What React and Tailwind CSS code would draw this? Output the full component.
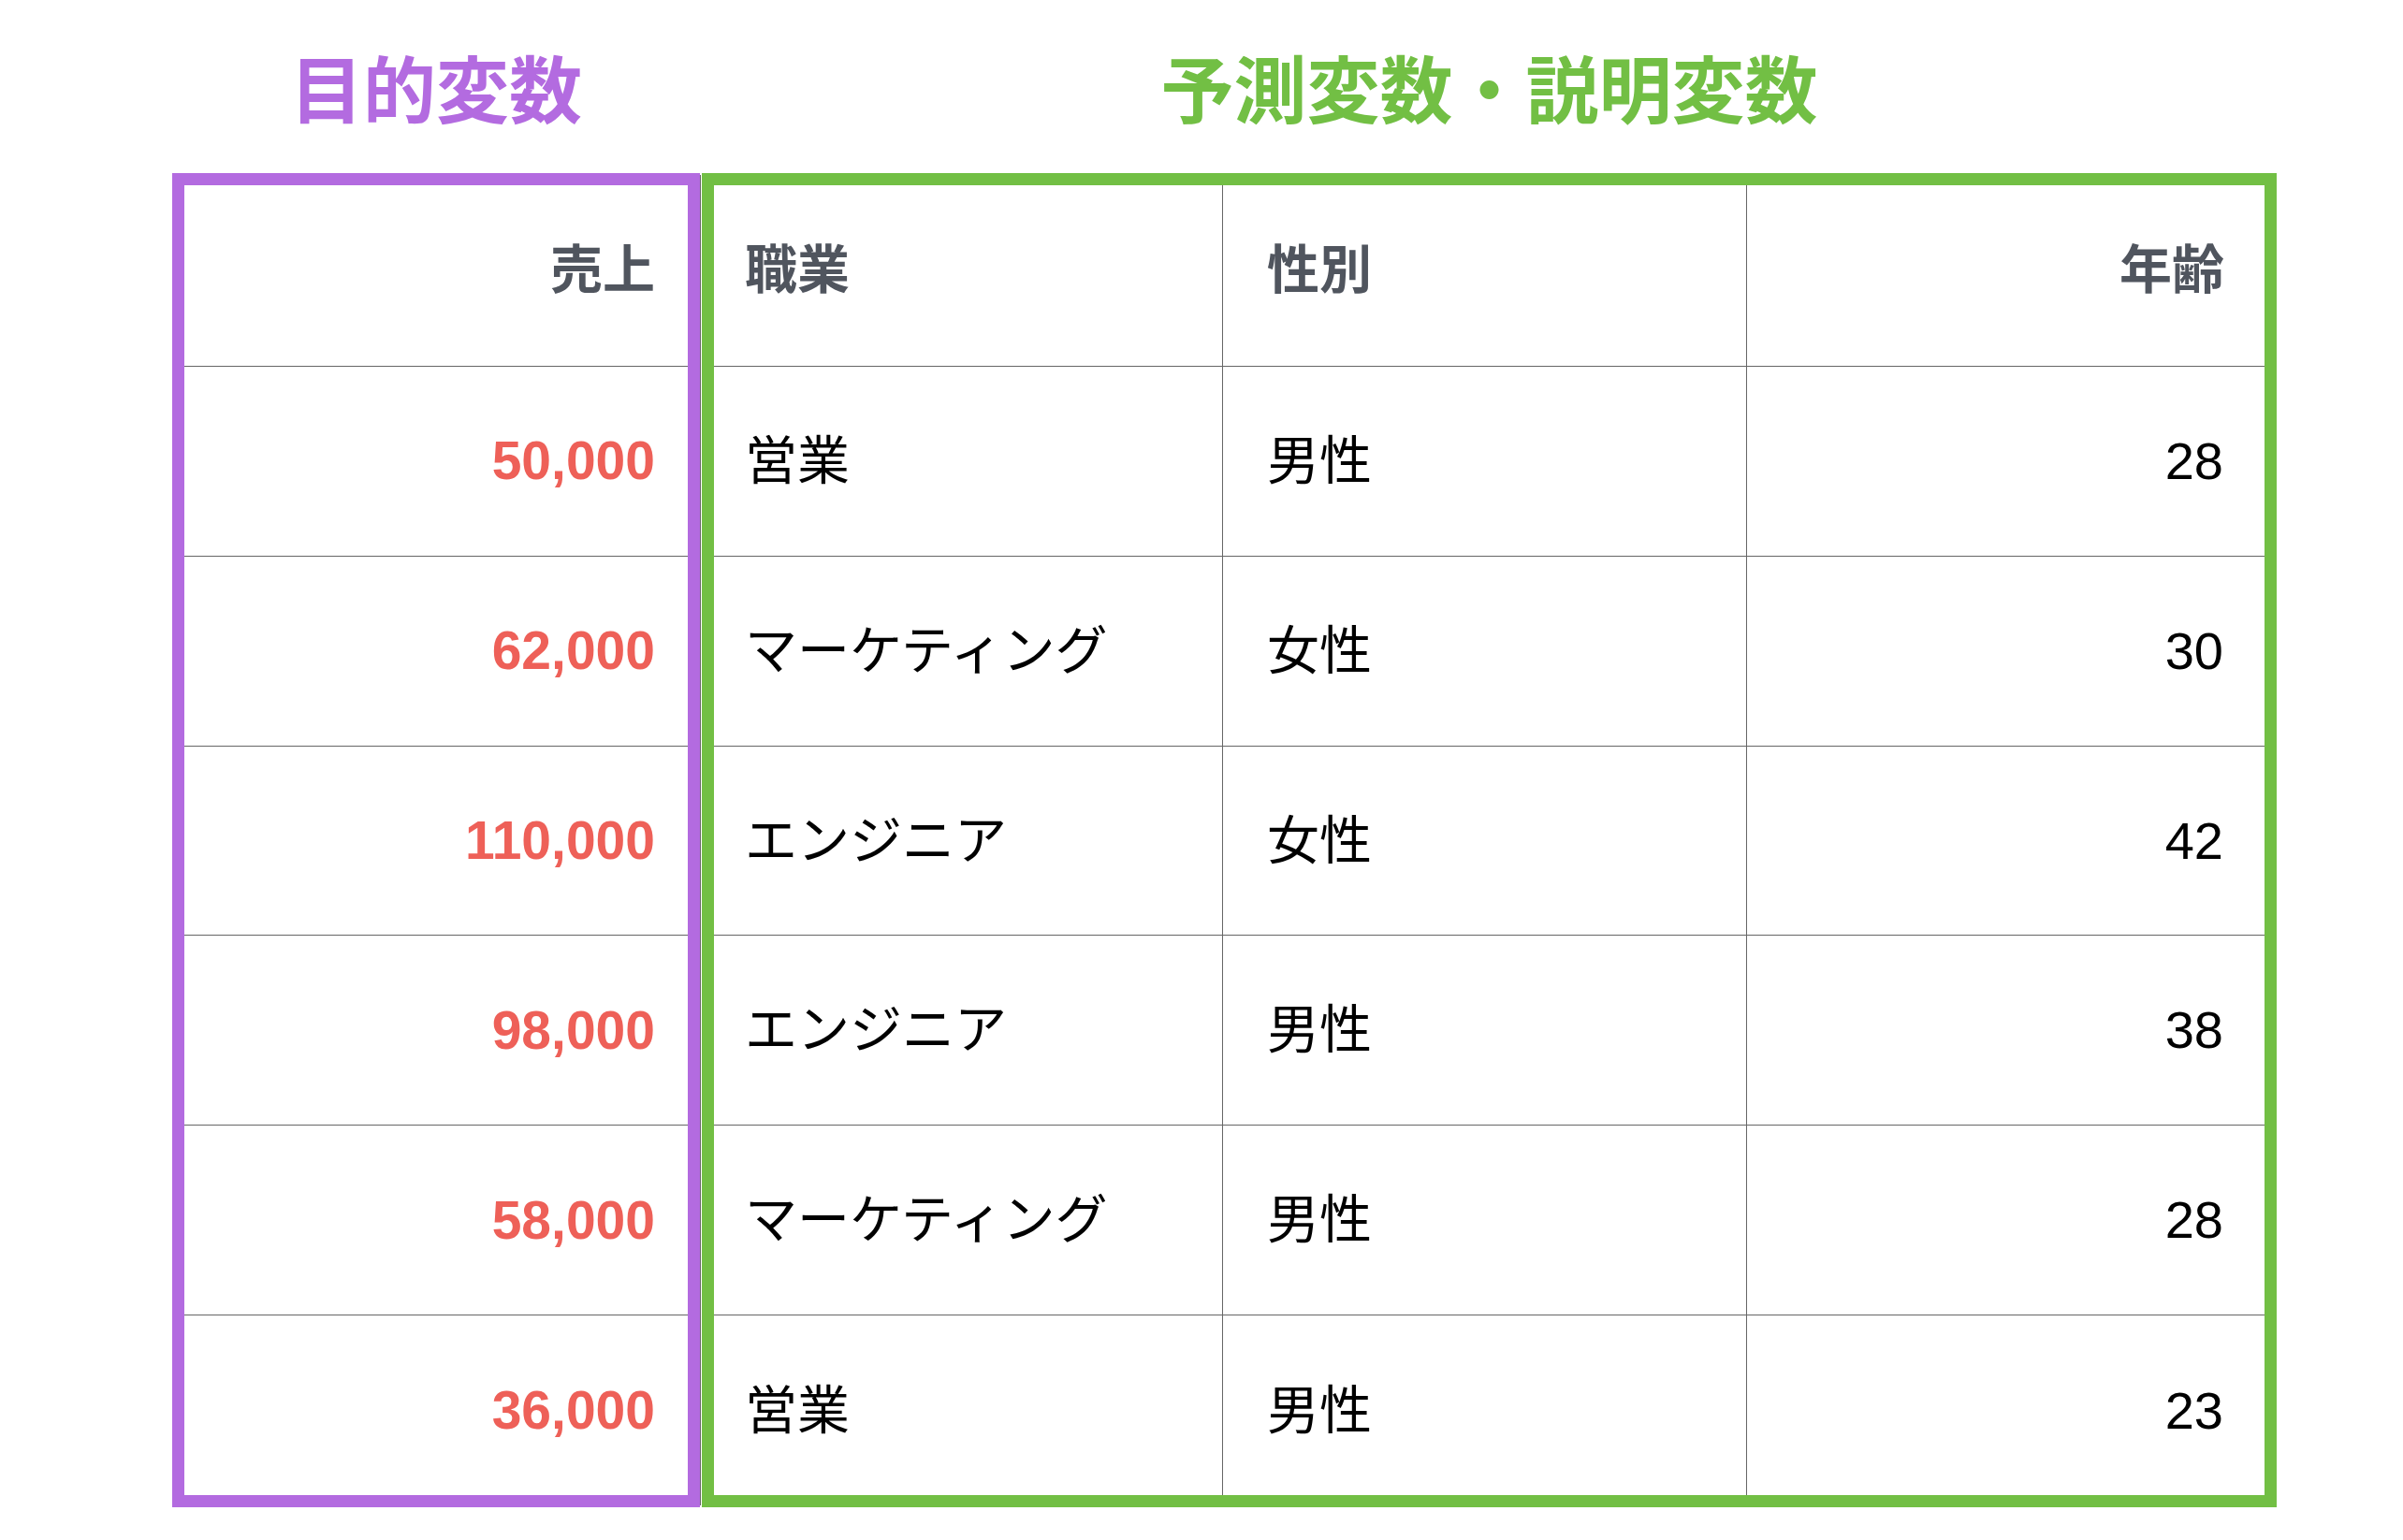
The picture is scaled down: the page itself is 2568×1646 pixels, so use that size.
const sales = ['50,000', '62,000', '110,000', '98,000', '58,000', '36,000'];

const rows = [
  { job: '営業', sex: '男性', age: 28 },
  { job: 'マーケティング', sex: '女性', age: 30 },
  { job: 'エンジニア', sex: '女性', age: 42 },
  { job: 'エンジニア', sex: '男性', age: 38 },
  { job: 'マーケティング', sex: '男性', age: 28 },
  { job: '営業', sex: '男性', age: 23 },
];

const font = { fontFamily: '"Liberation Sans", "Noto Sans CJK JP", sans-serif' };

// header sits slightly high, last row slightly low (the box border overlaps the table)
function rowH(i, last) {
  return i === last ? 'h-[193px] border-t border-[#666]' : 'h-[203px] border-t border-[#666]';
}
function cellPad(i, last) {
  return i === last ? 'pt-[11px]' : '';
}

export default function App() {
  return (
    <div className="w-[2568px] h-[1646px] bg-white" style={font}>
      <div className="flex pl-[184px]">
        <div className="flex flex-col">
          <div className="h-[185px] w-[564px] pt-[13px] flex items-center justify-center">
            <h1 className="text-[78px] leading-none font-bold text-[#b36be0]">目的変数</h1>
          </div>

          {/* target variable */}
          <div className="w-[564px] h-[1426px] border-[13px] border-[#b36be0] flex flex-col">
            <div className="h-[193px] pb-[11px] flex items-center justify-end pr-[35px]">
              <span className="text-[56px] leading-none font-bold text-[#50555e]">売上</span>
            </div>
            {sales.map((v, i) => (
              <div key={i} className={`${rowH(i, sales.length - 1)} ${cellPad(i, sales.length - 1)} flex items-center justify-end pr-[35px]`}>
                <span className="text-[57px] leading-none font-bold text-[#ee6058]">{v}</span>
              </div>
            ))}
          </div>
        </div>

        <div className="w-[2px] mt-[187px] h-[1422px] border-l border-[#666]" />

        <div className="flex flex-col">
          <div className="h-[185px] w-[1683px] pt-[13px] flex items-center justify-center">
            <h1 className="text-[78px] leading-none font-bold text-[#72bf44]">予測変数・説明変数</h1>
          </div>

          {/* predictor variables */}
          <div className="w-[1683px] h-[1426px] border-[13px] border-[#72bf44] flex flex-col">
            <div className="h-[193px] flex text-[56px] leading-none font-bold text-[#50555e]">
              <div className="w-[543px] pb-[11px] flex items-center pl-[33px]">職業</div>
              <div className="w-[560px] pb-[11px] flex items-center pl-[47px] border-l border-[#666]">性別</div>
              <div className="w-[554px] pb-[11px] flex items-center justify-end pr-[43px] border-l border-[#666]">年齢</div>
            </div>
            {rows.map((r, i) => {
              const pad = cellPad(i, rows.length - 1);
              return (
                <div key={i} className={`${rowH(i, rows.length - 1)} flex text-[56px] leading-none text-black`}>
                  <div className={`w-[543px] ${pad} flex items-center pl-[33px]`}>{r.job}</div>
                  <div className={`w-[560px] ${pad} flex items-center pl-[47px] border-l border-[#666]`}>{r.sex}</div>
                  <div className={`w-[554px] ${pad} flex items-center justify-end pr-[44px] border-l border-[#666]`}>{r.age}</div>
                </div>
              );
            })}
          </div>
        </div>
      </div>
    </div>
  );
}
